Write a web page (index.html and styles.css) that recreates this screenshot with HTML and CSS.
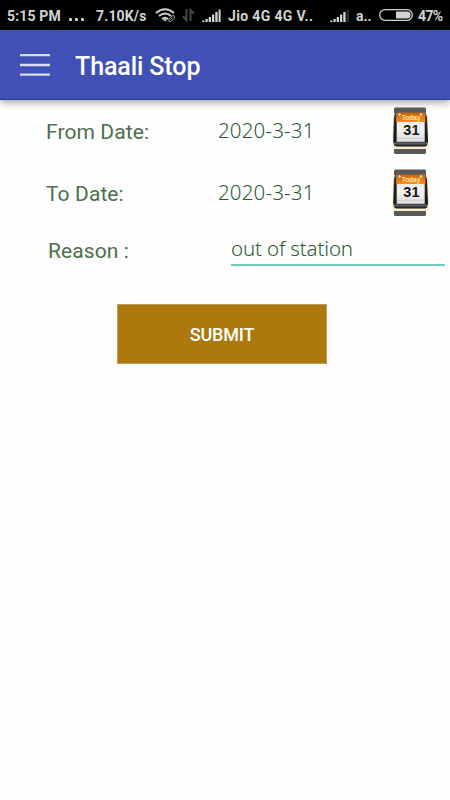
FILE: index.html
```
<!DOCTYPE html>
<html lang="en">
<head>
<meta charset="utf-8">
<title>Thaali Stop</title>
<link rel="stylesheet" href="styles.css">
</head>
<body>
<svg width="0" height="0" class="defs" aria-hidden="true">
  <defs>
    <linearGradient id="orange" x1="0" y1="0" x2="0" y2="1"><stop offset="0" stop-color="#bd6410"/><stop offset=".5" stop-color="#e57a0c"/><stop offset="1" stop-color="#f98f12"/></linearGradient>
    <linearGradient id="paper" x1="0" y1="0" x2="0" y2="1"><stop offset="0" stop-color="#dcdcdc"/><stop offset=".5" stop-color="#f4f4f4"/><stop offset="1" stop-color="#dedede"/></linearGradient>
    <linearGradient id="base" x1="0" y1="0" x2="0" y2="1"><stop offset="0" stop-color="#4a4643"/><stop offset=".3" stop-color="#24211e"/><stop offset=".84" stop-color="#191919"/><stop offset=".91" stop-color="#606064"/><stop offset="1" stop-color="#080808"/></linearGradient>
    <symbol id="calendar" viewBox="0 0 38 48">
      <rect x="2" y=".5" width="32" height="46.500" rx="1.500" fill="#58585b"/>
      <path d="M1 10 2 6H34.500L36 10 37 39Q37 42 34 42H3Q.2 42 .2 39Z" fill="#f8edcb"/>
      <path d="M3 6H33.500L35 10 36 34Q36 39.500 32.500 39.500H5Q1.200 39.500 1.200 34L2 10Z" fill="url(#base)"/>
      <rect x="4.700" y="6" width="28" height="28.800" fill="url(#paper)"/>
      <path d="M4.500 5.500H33.300V15H4.500Z" fill="url(#orange)"/>
      <path d="M5 31.200H32.500" stroke="#c6c6c6" stroke-width=".8"/>
      <circle cx="7.500" cy="7.500" r="1.200" fill="#e5d5cd"/><circle cx="29" cy="7.500" r="1.200" fill="#e5d5cd"/>
      <text x="19" y="13.300" text-anchor="middle" class="cal-today">Today</text>
      <text x="19.400" y="27.700" text-anchor="middle" class="cal-day">31</text>
    </symbol>
    <symbol id="signal" viewBox="0 0 19 14">
      <path d="M0 11.500h2.300V13H0zM3.400 10h2.300v3H3.400zM6.700 8h2.300v5H6.700zM10 5.500h2.300V13H10zM13.300 3h2.300v10h-2.300z" fill="#d2d2d2"/>
    </symbol>
  </defs>
</svg>
<div class="status">
  <span class="time">5:15 PM</span>
  <span class="dots"><i></i><i></i><i></i></span>
  <span class="speed">7.10K/s</span>
  <svg width="22" height="16" viewBox="0 0 22 16" fill="none" stroke="#d2d2d2">
    <path d="M1 6Q10 -1.300 19 6M4 9Q10 4 16 9M7 12Q10 9.500 13 12" stroke-width="1.900"/>
    <path d="M8 12.700Q10 11.300 12 12.700L10 14.500Z" fill="#d2d2d2" stroke="none"/>
    <path d="m14 12 3-3a1.500 1.500 0 0 1 2.200 2.200l-3 3a1.500 1.500 0 0 1-2.200-2.200Zm1.500.7 2.200-2.200" stroke="#999" stroke-width="1"/>
  </svg>
  <svg width="14" height="16" viewBox="0 0 14 16" fill="none" stroke="#484848" stroke-width="2"><path d="M4.500 2v11L.8 9.300M8.500 14V3L12.200 6.700"/></svg>
  <svg class="bars" width="19" height="14"><use href="#signal"/><path d="M16.600 .5h2V13h-2z" fill="#d2d2d2"/></svg>
  <span class="carrier">Jio 4G 4G V..</span>
  <svg class="bars" width="19" height="14"><use href="#signal"/><path d="M16.600 .5h2V13h-2z" fill="#363636"/></svg>
  <span class="second">a..</span>
  <svg width="34" height="12" viewBox="0 0 34 12"><rect x=".7" y=".7" width="32.600" height="10.600" rx="5.300" fill="none" stroke="#d2d2d2" stroke-width="1.300"/><path d="M17 2.500H28a3.500 3.500 0 0 1 0 7H17Z" fill="#d2d2d2"/></svg>
  <span class="percent">47%</span>
</div>
<header class="appbar">
  <svg class="menu" width="30" height="22" viewBox="0 0 30 22"><path d="M0 1.200H30M0 11H30M0 20.600H30" stroke="#d9dcf0" stroke-width="2.300"/></svg>
  <h1>Thaali Stop</h1>
</header>
<main>
  <div class="row from">
    <span class="label">From Date:</span><span class="value">2020-3-31</span>
    <svg class="cal" width="38" height="48"><use href="#calendar"/></svg>
  </div>
  <div class="row to">
    <span class="label">To Date:</span><span class="value">2020-3-31</span>
    <svg class="cal" width="38" height="48"><use href="#calendar"/></svg>
  </div>
  <div class="row reason">
    <span class="label">Reason :</span><div class="field">out of station</div>
  </div>
  <button class="submit">SUBMIT</button>
</main>
</body>
</html>
```
FILE: styles.css
```
* { box-sizing: border-box; }
body { margin: 0; width: 450px; height: 800px; overflow: hidden; background: #fefefe; font-family: Roboto, sans-serif; }
.defs { position: absolute; }
.cal-today { font: bold 6.500px "Liberation Sans", sans-serif; fill: #ffe2a8; }
.cal-day { font: bold 14.500px "Liberation Sans", sans-serif; fill: #161616; }

.status {
  display: grid;
  grid-template-columns: 61px 27px 59px 27px 20px 26px 102px 26px 23px 39px 1fr;
  align-items: center;
  height: 30px;
  padding-left: 8px;
  background: #000;
  color: #d2d2d2;
  font-size: 14px;
  font-weight: 700;
  line-height: 30px;
  white-space: nowrap;
}
.status > * { display: block; }
.status > span { height: 30px; padding-top: 1px; }
.status .time { margin-left: -1px; letter-spacing: .15px; }
.status .speed { letter-spacing: .15px; }
.status .carrier { letter-spacing: .35px; }
.status .percent { letter-spacing: -.6px; }
.status .bars { margin-top: 2px; }
.status .dots { display: flex; gap: 3px; padding-top: 18px; }
.dots i { width: 3px; height: 3px; border-radius: 1px; background: #d2d2d2; }

.appbar {
  display: flex;
  align-items: center;
  height: 70px;
  padding-left: 20px;
  background: #3f51b5;
  border-bottom: 1px solid #213ba0;
  box-shadow: 0 3px 7px rgba(0, 0, 0, .33);
}
.menu { margin-right: 25px; }
h1 { margin: 4px 0 0; color: #fff; font-size: 25px; font-weight: 500; line-height: 30px; letter-spacing: -.1px; }

.row {
  display: grid;
  grid-template-columns: 172px 174px 38px;
  align-items: center;
  height: 62px;
  padding-left: 46px;
}
.label { color: #4b704b; font-size: 21px; line-height: 28px; letter-spacing: .1px; }
.from .label, .to .label { padding-top: 1px; }
.value, .field { color: #2c5b32; font-family: "Noto Sans", sans-serif; font-size: 20.500px; font-weight: 300; line-height: 28px; white-space: nowrap; }
.value { margin-top: -2px; letter-spacing: .15px; }
.reason { grid-template-columns: 183px 214px; height: 54px; padding-left: 48px; }
.reason .label { margin-top: -1px; }
.field { height: 30px; border-bottom: 2px solid #70cbbb; letter-spacing: -.15px; line-height: 24px; }
.submit {
  display: block;
  width: 210px;
  height: 60px;
  margin: 26px 0 0 117px;
  padding: 0;
  border: 1px solid #bd9b5c;
  background: #ad790d;
  color: #fff;
  font: 500 18px Roboto, sans-serif;
  letter-spacing: -.2px;
}
```
